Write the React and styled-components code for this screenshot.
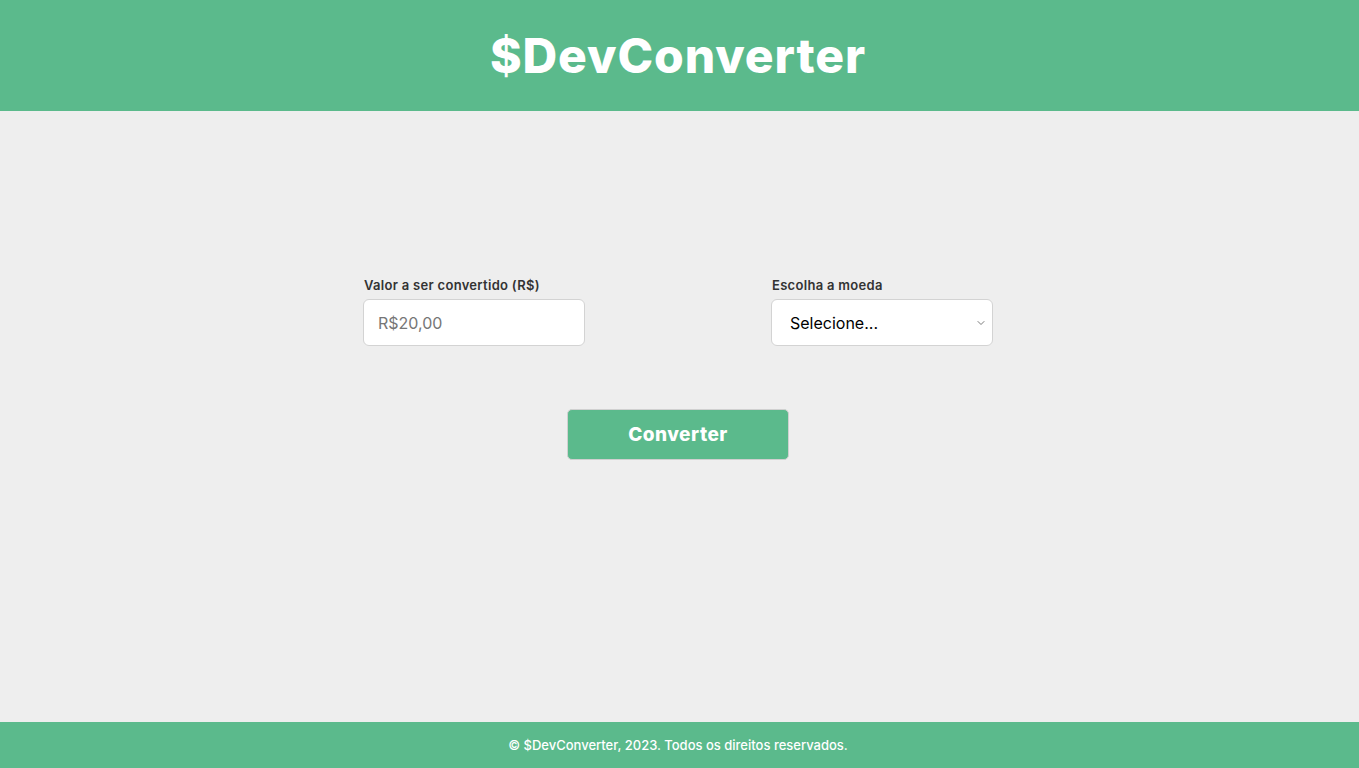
import React, { useState } from "react";
import styled, { createGlobalStyle } from "styled-components";
import { ChevronDown } from "lucide-react";

const GlobalStyle = createGlobalStyle`
  * {
    box-sizing: border-box;
    margin: 0;
    padding: 0;
  }
  body {
    font-family: Inter, "Open Sans", sans-serif;
    background-color: #eeeeee;
  }
`;

const Page = styled.div`
  display: flex;
  flex-direction: column;
  min-height: 100vh;
`;

const Header = styled.header`
  display: flex;
  align-items: center;
  justify-content: center;
  height: 111px;
  background-color: #5bba8c;
  padding-right: 3px;
`;

const Logo = styled.h1`
  color: #fff;
  font-size: 48px;
  font-weight: 800;
  letter-spacing: 0.9px;
`;

const Main = styled.main`
  flex: 1;
  display: flex;
  flex-direction: column;
  align-items: center;
  padding-top: 166px;
  padding-right: 3px;
`;

const Form = styled.form`
  display: flex;
  flex-direction: column;
  align-items: center;
  gap: 63px;
`;

const Fields = styled.div`
  display: flex;
  gap: 186px;
`;

const Field = styled.div`
  display: flex;
  flex-direction: column;
  gap: 6px;
`;

const Label = styled.label`
  font-size: 13px;
  font-weight: 600;
  letter-spacing: 0.3px;
  color: #333;
  padding-left: 1px;
`;

const Input = styled.input`
  width: 222px;
  height: 47px;
  border: 1px solid #d3d3d3;
  border-radius: 6px;
  background-color: #fff;
  padding: 0 14px;
  font-family: inherit;
  font-size: 16px;
  color: #222;
  outline: none;
  &::placeholder {
    color: #767676;
  }
`;

const SelectWrap = styled.div`
  position: relative;
  width: 222px;
  height: 47px;
`;

const Select = styled.select`
  appearance: none;
  width: 100%;
  height: 100%;
  border: 1px solid #d3d3d3;
  border-radius: 6px;
  background-color: #fff;
  padding: 0 28px 0 18px;
  font-family: inherit;
  font-size: 16px;
  color: #000;
  outline: none;
`;

const Arrow = styled.span`
  position: absolute;
  right: 6px;
  top: 50%;
  transform: translateY(-50%);
  display: flex;
  color: #6b6b6b;
  pointer-events: none;
`;

const Button = styled.button`
  width: 222px;
  height: 51px;
  border: 1px solid #d0d0d0;
  border-radius: 5px;
  background-color: #5bba8c;
  color: #fff;
  font-family: inherit;
  font-size: 19px;
  font-weight: 800;
  letter-spacing: 0.5px;
  cursor: pointer;
`;

const Footer = styled.footer`
  display: flex;
  align-items: center;
  justify-content: center;
  height: 46px;
  background-color: #5bba8c;
  color: #fff;
  font-size: 13px;
  font-weight: 500;
  padding-right: 3px;
`;

const App = () => {
  const [value, setValue] = useState("");
  const [currency, setCurrency] = useState("");

  return (
    <Page>
      <GlobalStyle />
      <Header>
        <Logo>$DevConverter</Logo>
      </Header>
      <Main>
        <Form onSubmit={(e) => e.preventDefault()}>
          <Fields>
            <Field>
              <Label htmlFor="valor">Valor a ser convertido (R$)</Label>
              <Input
                id="valor"
                type="text"
                placeholder="R$20,00"
                value={value}
                onChange={(e) => setValue(e.target.value)}
              />
            </Field>
            <Field>
              <Label htmlFor="moeda">Escolha a moeda</Label>
              <SelectWrap>
                <Select
                  id="moeda"
                  value={currency}
                  onChange={(e) => setCurrency(e.target.value)}
                >
                  <option value="">Selecione...</option>
                  <option value="USD">Dólar</option>
                  <option value="EUR">Euro</option>
                  <option value="BTC">Bitcoin</option>
                </Select>
                <Arrow>
                  <ChevronDown size={12} strokeWidth={1.8} />
                </Arrow>
              </SelectWrap>
            </Field>
          </Fields>
          <Button type="submit">Converter</Button>
        </Form>
      </Main>
      <Footer>© $DevConverter, 2023. Todos os direitos reservados.</Footer>
    </Page>
  );
};

export default App;
